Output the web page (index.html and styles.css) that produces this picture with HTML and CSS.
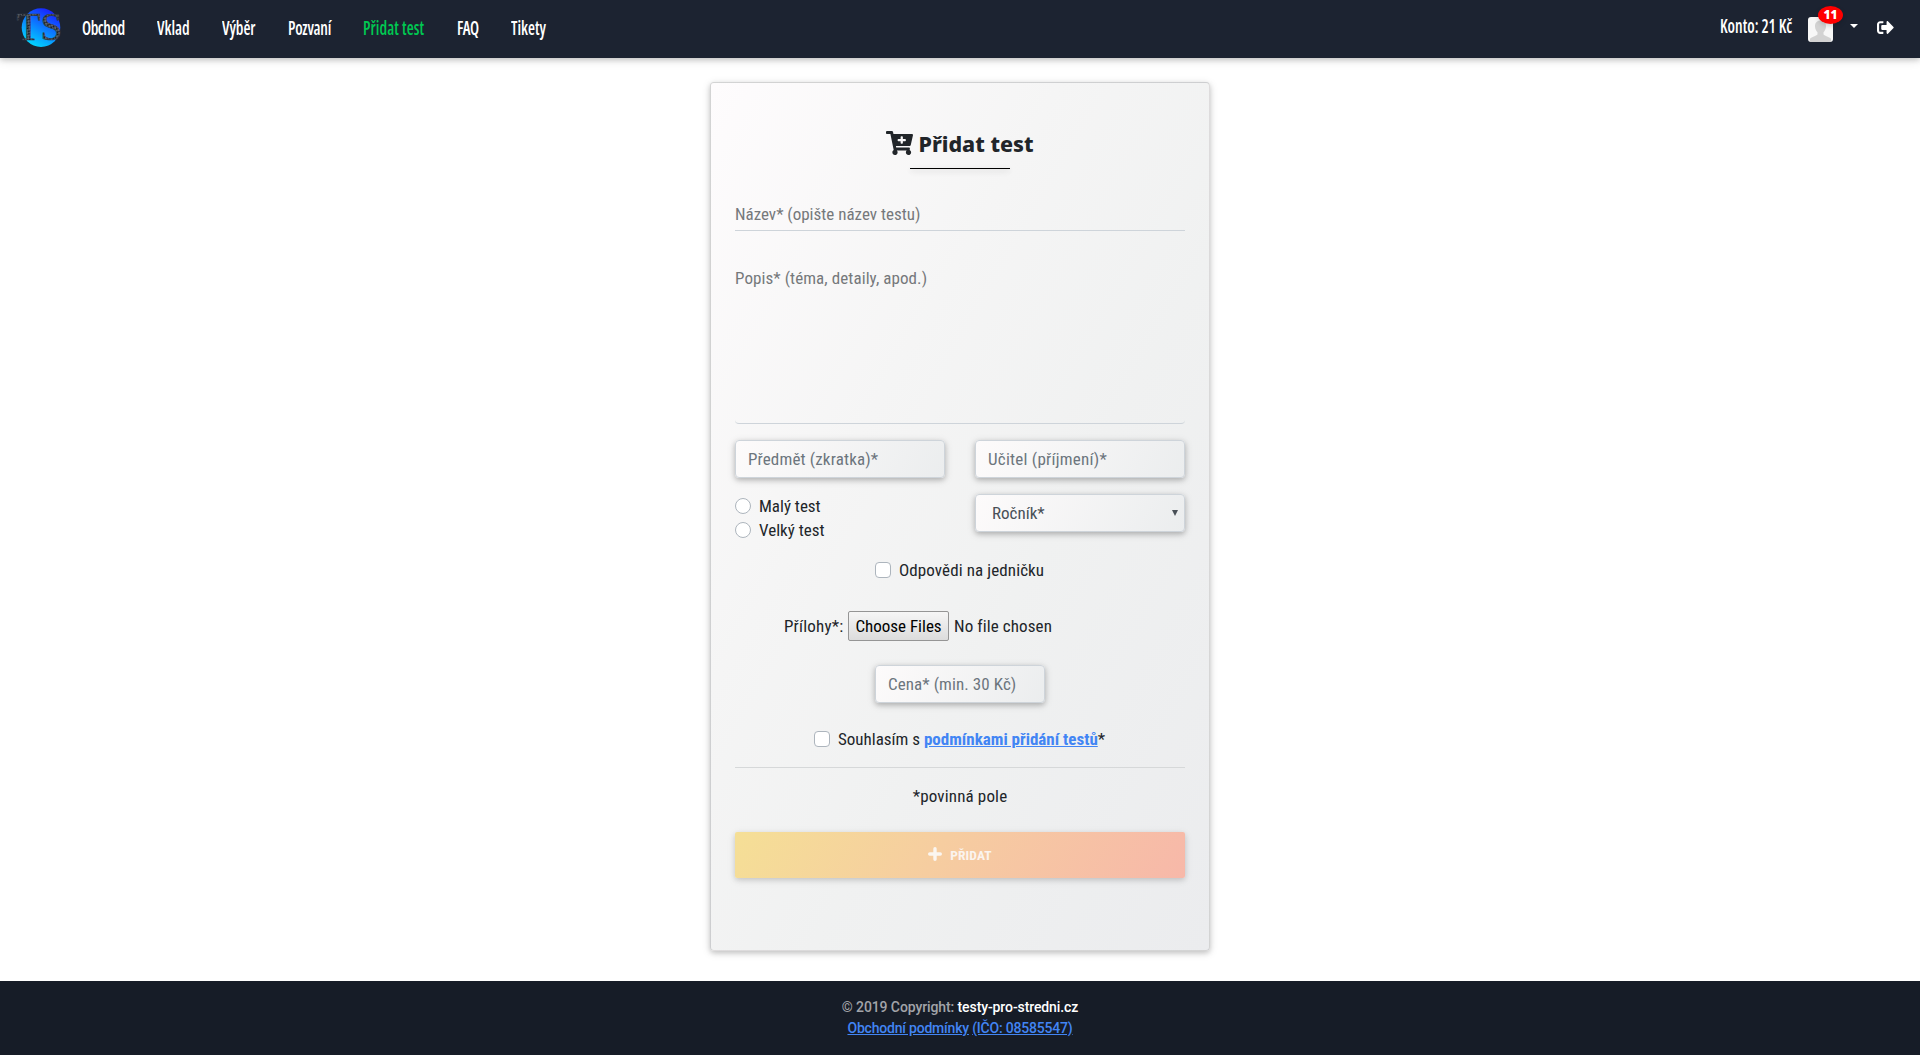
FILE: index.html
```html
<!DOCTYPE html>
<html lang="cs">
<head>
  <meta charset="utf-8">
  <title>Přidat test</title>
  <link rel="stylesheet" href="styles.css">
</head>
<body>
  <header class="navbar">
    <svg class="logo" width="54" height="52" viewBox="0 -4 54 52">
      <defs>
        <linearGradient id="globe" x1="0.2" y1="1" x2="0.75" y2="0">
          <stop offset="0" stop-color="#00e1ff"/>
          <stop offset="0.5" stop-color="#0b80ff"/>
          <stop offset="1" stop-color="#1a1aff"/>
        </linearGradient>
        <pattern id="marble" width="4" height="4" patternUnits="userSpaceOnUse" patternTransform="rotate(35)">
          <rect width="4" height="4" fill="#14171d"/>
          <path d="M0 1h2.500M1.500 3h2.500" stroke="#a3acb9" stroke-width="1.100"/>
        </pattern>
      </defs>
      <circle cx="27" cy="22.600" r="19.300" fill="url(#globe)"/>
      <text class="logo-text" x="2.500" y="35" textLength="46" lengthAdjust="spacingAndGlyphs" fill="url(#marble)">TS</text>
    </svg>
    <nav class="menu">
      <a class="link obchod">Obchod</a>
      <a class="link vklad">Vklad</a>
      <a class="link vyber">Výběr</a>
      <a class="link pozvani">Pozvaní</a>
      <a class="link active">Přidat test</a>
      <a class="link faq">FAQ</a>
      <a class="link tikety">Tikety</a>
    </nav>
    <div class="account">
      <span class="link konto">Konto: 21 Kč</span>
      <span class="avatar">
        <svg width="25" height="25" viewBox="0 0 25 25">
          <rect width="25" height="25" rx="3" fill="#f7f7f7"/>
          <path d="M12.5 3.5c3.6 0 5.6 2.500 5.500 6-.1 2.500-1.200 4.600-2.500 5.700v2.300c1.500 1.700 5.500 2 7.500 4.300V25H2v-3.200c2-2.300 6-2.600 7.500-4.300v-2.300C8.200 14.100 7.100 12 7 9.500c-.1-3.500 1.900-6 5.500-6z" fill="#d2d2d2"/>
        </svg>
        <span class="badge">11</span>
      </span>
      <span class="caret"></span>
      <svg class="signout" width="17" height="17" viewBox="0 0 512 512">
        <path fill="#fff" d="M497 273L329 441c-15 15-41 4.500-41-17v-96H152c-13.300 0-24-10.700-24-24v-96c0-13.300 10.700-24 24-24h136V88c0-21.400 25.900-32 41-17l168 168c9.300 9.400 9.300 24.600 0 34zM192 436v-40c0-6.600-5.400-12-12-12H96c-17.700 0-32-14.300-32-32V160c0-17.700 14.300-32 32-32h84c6.600 0 12-5.400 12-12V76c0-6.600-5.400-12-12-12H96c-53 0-96 43-96 96v192c0 53 43 96 96 96h84c6.600 0 12-5.400 12-12z"/>
      </svg>
    </div>
  </header>

  <main class="main">
    <form class="card">
      <h1 class="title">
        <svg width="27" height="24" viewBox="0 0 576 512">
          <path fill="#212529" d="M504.717 320H211.572l6.545 32h268.418c15.401 0 26.816 14.301 23.403 29.319l-5.517 24.276C523.112 414.668 536 433.828 536 456c0 31.202-25.519 56.444-56.824 55.994-29.823-.429-54.350-24.631-55.155-54.447-.440-16.287 6.085-31.049 16.803-41.548H231.176C241.553 426.165 248 440.326 248 456c0 31.813-26.528 57.431-58.670 55.938-28.540-1.325-51.751-24.385-53.251-52.917-1.158-22.034 10.436-41.455 28.051-51.586L93.883 64H24C10.745 64 0 53.255 0 40V24C0 10.745 10.745 0 24 0h102.529c11.401 0 21.228 8.021 23.513 19.190L159.208 64H551.990c15.401 0 26.816 14.301 23.403 29.319l-47.273 208C525.637 312.246 515.923 320 504.717 320zM408 168h-48v-40c0-8.837-7.163-16-16-16h-16c-8.837 0-16 7.163-16 16v40h-48c-8.837 0-16 7.163-16 16v16c0 8.837 7.163 16 16 16h48v40c0 8.837 7.163 16 16 16h16c8.837 0 16-7.163 16-16v-40h48c8.837 0 16-7.163 16-16v-16c0-8.837-7.163-16-16-16z"/>
        </svg>
        <span>Přidat test</span>
      </h1>
      <div class="underline"></div>
      <input class="line-input" type="text" placeholder="Název* (opište název testu)">
      <textarea class="line-area" placeholder="Popis* (téma, detaily, apod.)"></textarea>
      <div class="columns">
        <input class="box subject" type="text" placeholder="Předmět (zkratka)*">
        <input class="box teacher" type="text" placeholder="Učitel (příjmení)*">
        <div class="radios">
          <label class="choice"><span class="mark round"></span>Malý test</label>
          <label class="choice"><span class="mark round"></span>Velký test</label>
        </div>
        <div class="box select"><span>Ročník*</span><svg width="6" height="6" viewBox="0 0 6 6"><path d="M0 0h6L3 6z" fill="#495057"/></svg></div>
      </div>
      <label class="choice answers"><span class="mark"></span>Odpovědi na jedničku</label>
      <div class="files">
        <span class="files-label">Přílohy*:</span>
        <button class="file-button" type="button">Choose Files</button>
        <span class="file-name">No file chosen</span>
      </div>
      <input class="box price" type="text" placeholder="Cena* (min. 30 Kč)">
      <label class="choice terms"><span class="mark"></span><span>Souhlasím s <a class="terms-link">podmínkami přidání testů</a>*</span></label>
      <hr class="rule">
      <p class="required">*povinná pole</p>
      <button class="submit" type="button">
        <svg width="14" height="14" viewBox="0 0 14 14"><path d="M7 1.700v10.600M1.700 7h10.600" stroke="#fbf6f0" stroke-width="3.400" stroke-linecap="round"/></svg>
        <span>PŘIDAT</span>
      </button>
    </form>
  </main>

  <footer class="footer">
    <div class="copyright">© 2019 Copyright: <a class="site">testy-pro-stredni.cz</a></div>
    <div class="legal"><a>Obchodní podmínky</a> <a>(IČO: 08585547)</a></div>
  </footer>
</body>
</html>
```
FILE: styles.css
```css
* {
  box-sizing: border-box;
}

body {
  margin: 0;
  height: 1055px;
  display: flex;
  flex-direction: column;
  overflow: hidden;
  background: #fff;
  color: #212529;
  font-family: Roboto, "Noto Sans", sans-serif;
  font-size: 17px;
  font-stretch: 75%;
  line-height: 24px;
}

input,
textarea,
button {
  font: inherit;
  font-stretch: 75%;
  color: inherit;
  outline: none;
}

/* Top bar */
.navbar {
  height: 58px;
  flex: none;
  display: flex;
  align-items: flex-start;
  padding: 5px 26px 0 14px;
  background: #1c2331;
  box-shadow: 0 2px 5px rgba(0, 0, 0, .16), 0 2px 10px rgba(0, 0, 0, .12);
}

.logo {
  margin-top: -4px;
}

.logo-text {
  font-family: "Liberation Serif", serif;
  font-size: 41px;
  font-weight: 400;
  stroke: #343b47;
  stroke-width: .6px;
}

.menu {
  display: flex;
  gap: 32px;
  padding: 10.5px 0 0 14px;
}

.link {
  font-family: "Open Sans", sans-serif;
  font-stretch: 75%;
  font-weight: 600;
  font-size: 16px;
  line-height: 24px;
  color: #fff;
  white-space: nowrap;
  transform: scaleY(1.2);
}

.obchod { width: 43px; letter-spacing: -.45px; }
.vklad { width: 33px; }
.vyber { width: 34px; letter-spacing: -.1px; }
.pozvani { width: 43px; letter-spacing: -.25px; }
.active { width: 62px; letter-spacing: .1px; color: #00c851; }
.faq { width: 22px; letter-spacing: -.6px; }
.tikety { width: 34px; }

.account {
  margin-left: auto;
  display: flex;
  padding-top: 9px;
}

.konto {
  width: 73px;
}

.avatar {
  position: relative;
  width: 25px;
  height: 25px;
  margin: 3px 0 0 15px;
}

.avatar svg {
  display: block;
}

.badge {
  position: absolute;
  left: 10px;
  top: -11px;
  width: 25px;
  height: 18px;
  border-radius: 50%;
  background: #f00;
  box-shadow: 0 2px 5px rgba(0, 0, 0, .16);
  color: #fff;
  font-family: "Noto Sans", sans-serif;
  font-size: 12px;
  font-weight: 900;
  line-height: 17px;
  text-align: center;
}

.caret {
  margin: 10px 0 0 17px;
  height: 0;
  border: 4px solid transparent;
  border-top-color: #fff;
  border-bottom: 0;
}

.signout {
  margin: 5px 0 0 19px;
}

/* Form card */
.main {
  height: 923px;
  flex: none;
  padding-top: 24px;
  display: flex;
  justify-content: center;
  align-items: flex-start;
}

.card {
  width: 500px;
  height: 869px;
  display: flex;
  flex-direction: column;
  padding: 47px 24px 0;
  border: 1px solid rgba(0, 0, 0, .125);
  border-radius: 4px;
  background: linear-gradient(120deg, #fefcfd 0%, #f5f5f5 35%, #f0f1f1 60%, #ebecee 100%);
  box-shadow: 0 2px 5px rgba(0, 0, 0, .16), 0 2px 10px rgba(0, 0, 0, .12);
}

.title {
  display: flex;
  justify-content: center;
  gap: 5px;
  height: 38px;
  margin: 0;
  font-family: "Noto Sans", sans-serif;
  font-size: 21.5px;
  font-weight: 800;
  line-height: 27px;
}

.title svg {
  margin-top: 1px;
}

.underline {
  width: 100px;
  height: 1px;
  align-self: center;
  background: #000;
  box-shadow: 0 2px 5px rgba(0, 0, 0, .16), 0 2px 10px rgba(0, 0, 0, .12);
}

::placeholder {
  color: #75787b;
  opacity: 1;
}

.line-input {
  width: 450px;
  height: 38px;
  margin: 24px 0 0;
  padding: 8px 0 4px;
  border: 0;
  border-bottom: 1px solid #ced4da;
  background: transparent;
}

.line-area {
  width: 450px;
  height: 169px;
  margin: 24px 0 0;
  padding: 11px 0 0;
  resize: none;
  border: 0;
  border-bottom: 1px solid #ced4da;
  border-radius: 4px;
  background: transparent;
  letter-spacing: .08px;
}

.columns {
  display: grid;
  grid-template-columns: 210px 210px;
  grid-template-rows: 38px 38px;
  column-gap: 30px;
  row-gap: 16px;
  margin-top: 16px;
}

.box {
  height: 38px;
  padding: 6px 12px;
  border: 1px solid #ced4da;
  border-radius: 4px;
  background: linear-gradient(120deg, #fdfbfb, #ebedee);
  box-shadow: 0 2px 5px rgba(0, 0, 0, .2), 0 2px 10px rgba(0, 0, 0, .12);
}

.box::placeholder {
  color: #6c757d;
}

.subject {
  letter-spacing: .15px;
}

.teacher {
  letter-spacing: .25px;
}

.select {
  display: flex;
  align-items: center;
  justify-content: space-between;
  padding: 0 6px 0 16px;
  color: #495057;
}

.radios {
  display: flex;
  flex-direction: column;
}

.choice {
  display: flex;
  align-items: center;
  gap: 8px;
  height: 24px;
  flex: none;
  white-space: nowrap;
}

.mark {
  width: 16px;
  height: 16px;
  flex: none;
  border: 1px solid #adb5bd;
  border-radius: 4px;
  background: #fff;
}

.round {
  border-radius: 50%;
}

.answers {
  margin: 26px 0 0 140px;
  letter-spacing: .1px;
}

.files {
  display: flex;
  align-items: center;
  height: 30px;
  margin: 29px 0 0 49px;
  white-space: nowrap;
}

.files-label {
  width: 64px;
  letter-spacing: .2px;
}

.file-button {
  width: 101px;
  height: 30px;
  padding: 0;
  border: 1px solid #959595;
  border-radius: 2px;
  background: linear-gradient(#f6f6f6, #dcdcdc);
  color: #000;
}

.file-name {
  margin-left: 5px;
  letter-spacing: .1px;
}

.price {
  width: 170px;
  margin: 24px 0 0;
  align-self: center;
  letter-spacing: .08px;
}

.terms {
  margin: 24px 0 0 79px;
}

.terms-link {
  color: #4285f4;
  font-weight: 700;
  text-decoration: underline;
}

.rule {
  width: 450px;
  height: 1px;
  margin: 16px 0 0;
  border: 0;
  background: #d6d8d9;
}

.required {
  margin: 16px 0 0;
  height: 24px;
  text-align: center;
  letter-spacing: .15px;
}

.submit {
  display: flex;
  align-items: center;
  justify-content: center;
  gap: 8px;
  width: 450px;
  height: 46px;
  flex: none;
  margin: 24px 0 0;
  padding: 0 0 2px;
  border: 0;
  border-radius: 2px;
  background: linear-gradient(120deg, #f5df96, #f6cda0 45%, #f7b8a9);
  box-shadow: 0 2px 5px rgba(0, 0, 0, .12), 0 2px 10px rgba(0, 0, 0, .09);
  color: #fbf4ef;
  font-size: 13.5px;
  font-weight: 700;
}

.submit span {
  padding-top: 1px;
  letter-spacing: .1px;
}

/* Footer */
.footer {
  height: 74px;
  flex: none;
  padding-top: 16px;
  background: #161c27;
  color: #a2a4a9;
  font-size: 14px;
  font-stretch: 100%;
  font-weight: 500;
  line-height: 21px;
  letter-spacing: -.1px;
  text-align: center;
}

.site {
  color: #fff;
}

.legal {
  letter-spacing: -.2px;
}

.legal a {
  color: #4285f4;
  text-decoration: underline;
}
```
